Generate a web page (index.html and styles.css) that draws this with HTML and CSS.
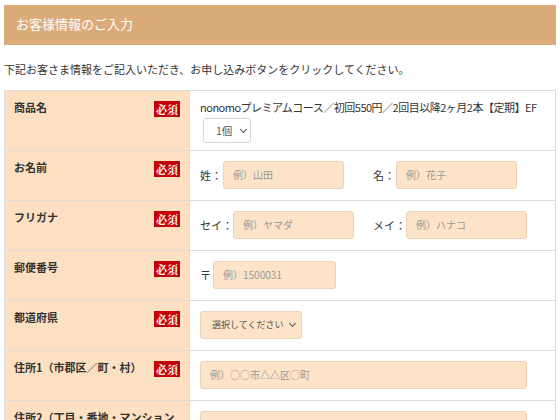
FILE: index.html
```html
<!DOCTYPE html>
<html lang="ja">
<head>
    <meta charset="UTF-8">
    <title>お客様情報のご入力</title>
    <link rel="stylesheet" href="styles.css">
</head>
<body>
    <div class="wrap">
        <h2 class="ttl">お客様情報のご入力</h2>
        <p class="lead">下記お客さま情報をご記入いただき、お申し込みボタンをクリックしてください。</p>
        <table class="form">
            <tr class="r-item">
                <th><em class="req">必須</em>商品名</th>
                <td>
                    <div class="item-name">nonomoプレミアムコース／初回550円／2回目以降2ヶ月2本【定期】EF</div>
                    <div class="sel sel-qty">1個<i></i></div>
                </td>
            </tr>
            <tr>
                <th><em class="req">必須</em>お名前</th>
                <td>
                    <div class="pair">
                        <div class="grp"><label>姓：</label><div class="inp w120">例）山田</div></div>
                        <div class="grp"><label>名：</label><div class="inp w120">例）花子</div></div>
                    </div>
                </td>
            </tr>
            <tr>
                <th><em class="req">必須</em>フリガナ</th>
                <td>
                    <div class="pair kana">
                        <div class="grp"><label>セイ：</label><div class="inp w120">例）ヤマダ</div></div>
                        <div class="grp"><label>メイ：</label><div class="inp w120">例）ハナコ</div></div>
                    </div>
                </td>
            </tr>
            <tr>
                <th><em class="req">必須</em>郵便番号</th>
                <td>
                    <div class="grp">
                        <label class="zip">〒</label><div class="inp w122">例）1500031</div>
                    </div>
                </td>
            </tr>
            <tr>
                <th><em class="req">必須</em>都道府県</th>
                <td>
                    <div class="sel sel-pref">選択してください<i></i></div>
                </td>
            </tr>
            <tr>
                <th><em class="req">必須</em>住所1（市郡区／町・村）</th>
                <td>
                    <div class="inp wfull">例）○○市△△区○町</div>
                </td>
            </tr>
            <tr>
                <th>住所2（丁目・番地・マンション名・部屋番号）</th>
                <td>
                    <div class="inp wfull">例）1-2-3 ○○マンション101号</div>
                </td>
            </tr>
        </table>
    </div>
</body>
</html>
```

FILE: styles.css
```css
* {
    margin: 0;
    padding: 0;
    box-sizing: border-box;
}
body {
    font-family: "Noto Sans CJK JP", "Liberation Sans", sans-serif;
    font-size: 11px;
    line-height: 18px;
    color: #333;
    background: #fff;
}
.wrap {
    padding: 5px 4px 0;
}
.ttl {
    height: 40px;
    line-height: 38px;
    padding-left: 12px;
    background: #dcab7a;
    color: #fff;
    font-size: 13px;
    font-weight: normal;
}
.lead {
    margin-top: 15px;
    line-height: 18px;
}
.form {
    margin-top: 12px;
    width: 100%;
    border-collapse: collapse;
    table-layout: fixed;
}
.form th,
.form td {
    border: 1px solid #dcdcdc;
    vertical-align: top;
    text-align: left;
}
.form th {
    width: 185px;
    background: #fde0c2;
    padding: 7px 9px 0 9px;
    font-weight: bold;
    font-size: 11px;
    line-height: 18px;
}
.form td {
    height: 50px;
    padding: 10px 10px 10px;
}
.form .r-item td {
    height: 57px;
    padding-top: 7px;
    padding-bottom: 7px;
}
.req {
    float: right;
    margin: 3px 0 0 4px;
    width: 26px;
    height: 16px;
    line-height: 16px;
    background: #c4000b;
    color: #fff;
    font-style: normal;
    font-weight: bold;
    font-size: 11px;
    text-align: center;
    font-family: "Noto Serif CJK JP", "Noto Sans CJK JP", serif;
}
.item-name {
    white-space: nowrap;
    letter-spacing: -0.5px;
}
.sel {
    display: flex;
    align-items: center;
    height: 25px;
    padding-left: 12px;
    border: 1px solid #d6d6d6;
    border-radius: 3px;
    color: #555;
    font-size: 10.5px;
    white-space: nowrap;
}
.sel i {
    flex-shrink: 0;
    width: 5px;
    height: 5px;
    margin-left: 9px;
    margin-top: -3px;
    border-right: 1.5px solid #555;
    border-bottom: 1.5px solid #555;
    transform: rotate(45deg);
}
.sel-qty {
    width: 48px;
    margin: 2px 0 0 3px;
    background: #fff;
}
.sel-pref {
    width: 102px;
    height: 28px;
    padding-left: 11px;
    background: #fde3c8;
    border-color: #ecd2b6;
    font-size: 9px;
}
.sel-pref i {
    margin-left: 7px;
}
.pair {
    display: grid;
    grid-template-columns: 173px 173px;
}
.grp {
    display: flex;
    align-items: center;
}
.grp label {
    flex-shrink: 0;
    width: 23px;
    white-space: nowrap;
}
.kana .grp label {
    width: 33px;
}
.grp label.zip {
    width: 13px;
}
.inp {
    flex-shrink: 0;
    height: 28px;
    line-height: 26px;
    padding-left: 9px;
    background: #fde3c8;
    border: 1px solid #ecd2b6;
    border-radius: 3px;
    color: #999;
    font-size: 10px;
    white-space: nowrap;
}
.w120 {
    width: 121px;
}
.w122 {
    width: 123px;
}
.wfull {
    width: 327px;
}
```
